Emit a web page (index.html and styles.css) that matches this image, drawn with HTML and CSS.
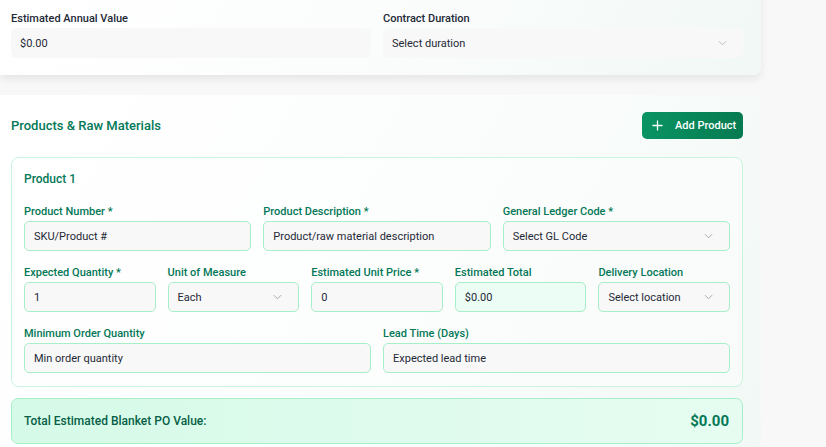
FILE: index.html
```html
<!DOCTYPE html>
<html>
<head>
<meta charset="utf-8">
<link rel="stylesheet" href="styles.css">
</head>
<body>
<div class="page">
  <section class="card card-top">
    <div class="grid-2">
      <div class="field">
        <label class="lbl-dark">Estimated Annual Value</label>
        <div class="input plain">$0.00</div>
      </div>
      <div class="field">
        <label class="lbl-dark">Contract Duration</label>
        <div class="input plain select">Select duration
          <svg class="chev" viewBox="0 0 10 6" width="9" height="6"><path d="M1 1l4 4 4-4" fill="none" stroke="#bdbdbd" stroke-width="1.1"/></svg>
        </div>
      </div>
    </div>
  </section>

  <section class="card card-products">
    <div class="head">
      <h2 class="title">Products &amp; Raw Materials</h2>
      <button class="add-btn">
        <svg viewBox="0 0 12 12" width="11" height="11"><path d="M6 1v10M1 6h10" stroke="#fff" stroke-width="1.4" stroke-linecap="round"/></svg>
        <span>Add Product</span>
      </button>
    </div>

    <div class="product">
      <h3 class="ptitle">Product 1</h3>
      <div class="grid-3">
        <div class="field"><label class="lbl">Product Number *</label><div class="input g">SKU/Product #</div></div>
        <div class="field"><label class="lbl">Product Description *</label><div class="input g">Product/raw material description</div></div>
        <div class="field"><label class="lbl">General Ledger Code *</label><div class="input g select">Select GL Code<svg class="chev" viewBox="0 0 10 6" width="9" height="6"><path d="M1 1l4 4 4-4" fill="none" stroke="#a8a8a8" stroke-width="1.1"/></svg></div></div>
      </div>
      <div class="grid-5">
        <div class="field"><label class="lbl">Expected Quantity *</label><div class="input g">1</div></div>
        <div class="field"><label class="lbl">Unit of Measure</label><div class="input g select">Each<svg class="chev" viewBox="0 0 10 6" width="9" height="6"><path d="M1 1l4 4 4-4" fill="none" stroke="#a8a8a8" stroke-width="1.1"/></svg></div></div>
        <div class="field"><label class="lbl">Estimated Unit Price *</label><div class="input g">0</div></div>
        <div class="field"><label class="lbl">Estimated Total</label><div class="input g total">$0.00</div></div>
        <div class="field"><label class="lbl">Delivery Location</label><div class="input g select">Select location<svg class="chev" viewBox="0 0 10 6" width="9" height="6"><path d="M1 1l4 4 4-4" fill="none" stroke="#a8a8a8" stroke-width="1.1"/></svg></div></div>
      </div>
      <div class="grid-2 last">
        <div class="field"><label class="lbl">Minimum Order Quantity</label><div class="input g">Min order quantity</div></div>
        <div class="field"><label class="lbl">Lead Time (Days)</label><div class="input g">Expected lead time</div></div>
      </div>
    </div>

    <div class="summary">
      <span class="sum-label">Total Estimated Blanket PO Value:</span>
      <span class="sum-value">$0.00</span>
    </div>
  </section>
</div>
</body>
</html>
```

FILE: styles.css
```css
* { box-sizing: border-box; margin: 0; padding: 0; }
html, body { background: #f8f8f8; }
body {
  font-family: Roboto, Inter, "Noto Sans", sans-serif;
  font-size: 11px;
  color: #1f2937;
  width: 826px;
  height: 447px;
  overflow: hidden;
}
.page {
  width: 761px;
  display: flex;
  flex-direction: column;
  gap: 20px;
  margin-top: -41px;
}
.card {
  background: linear-gradient(120deg, #ffffff 0%, #fbfdfc 50%, #f1f8f5 100%);
  border-radius: 0 8px 8px 0;
  padding: 17px 18px 18px 11px;
}
.card-top {
  padding-top: 52px;
  padding-bottom: 17px;
  box-shadow: 0 4px 8px rgba(0,0,0,0.08);
}
.grid-2 {
  display: grid;
  grid-template-columns: 1fr 1fr;
  gap: 12px;
}
.field { display: flex; flex-direction: column; }
.lbl-dark {
  font-weight: 500;
  font-size: 11px;
  color: #1f2937;
  line-height: 14px;
  padding-top: 1px;
  margin-bottom: 2px;
}
.input {
  height: 30px;
  border-radius: 6px;
  display: flex;
  align-items: center;
  padding: 0 9px;
  font-size: 11px;
  color: #1f2937;
  white-space: nowrap;
}
.plain { background: #f8f8f8; }
.select { justify-content: space-between; padding-right: 16px; }
.chev { flex: none; }
.card-products { padding-bottom: 30px; }
.head {
  display: flex;
  justify-content: space-between;
  align-items: center;
  margin-bottom: 18px;
}
.title {
  font-size: 13px;
  font-weight: 500;
  color: #047857;
}
.add-btn {
  height: 27px;
  width: 101px;
  border: none;
  border-radius: 5px;
  background: linear-gradient(90deg, #0a9463 0%, #067a50 100%);
  color: #fff;
  font-family: inherit;
  font-size: 11px;
  font-weight: 500;
  display: flex;
  align-items: center;
  white-space: nowrap;
  padding: 0 10px 0 10px;
}
.add-btn svg { margin-right: 12px; flex: none; }
.product {
  border: 1px solid #c9f5de;
  border-radius: 8px;
  padding: 13px 12px 13px 12px;
  background: rgba(255,255,255,0.4);
}
.ptitle {
  font-size: 12px;
  font-weight: 500;
  color: #047857;
  line-height: 16px;
  margin-bottom: 17px;
}
.lbl {
  font-weight: 500;
  font-size: 11px;
  color: #047857;
  line-height: 14px;
  padding-top: 1px;
  margin-bottom: 2px;
}
.g {
  height: 30px;
  background: #f8f8f8;
  border: 1px solid #a7efc8;
  border-radius: 5px;
}
.grid-3 {
  display: grid;
  grid-template-columns: repeat(3, 1fr);
  gap: 12px;
  margin-bottom: 14px;
}
.grid-5 {
  display: grid;
  grid-template-columns: repeat(5, 1fr);
  gap: 12px;
  margin-bottom: 14px;
}
.total { background: #ecfdf5; }
.summary {
  margin-top: 11px;
  height: 46px;
  border: 1px solid #a7efc8;
  border-radius: 7px;
  background: linear-gradient(90deg, #d6fae8 0%, #e6fcf1 100%);
  display: flex;
  justify-content: space-between;
  align-items: center;
  padding: 0 13px 0 12px;
}
.sum-label {
  font-size: 12px;
  font-weight: 500;
  color: #065f46;
}
.sum-value {
  font-size: 15px;
  font-weight: 700;
  color: #047857;
}
```
